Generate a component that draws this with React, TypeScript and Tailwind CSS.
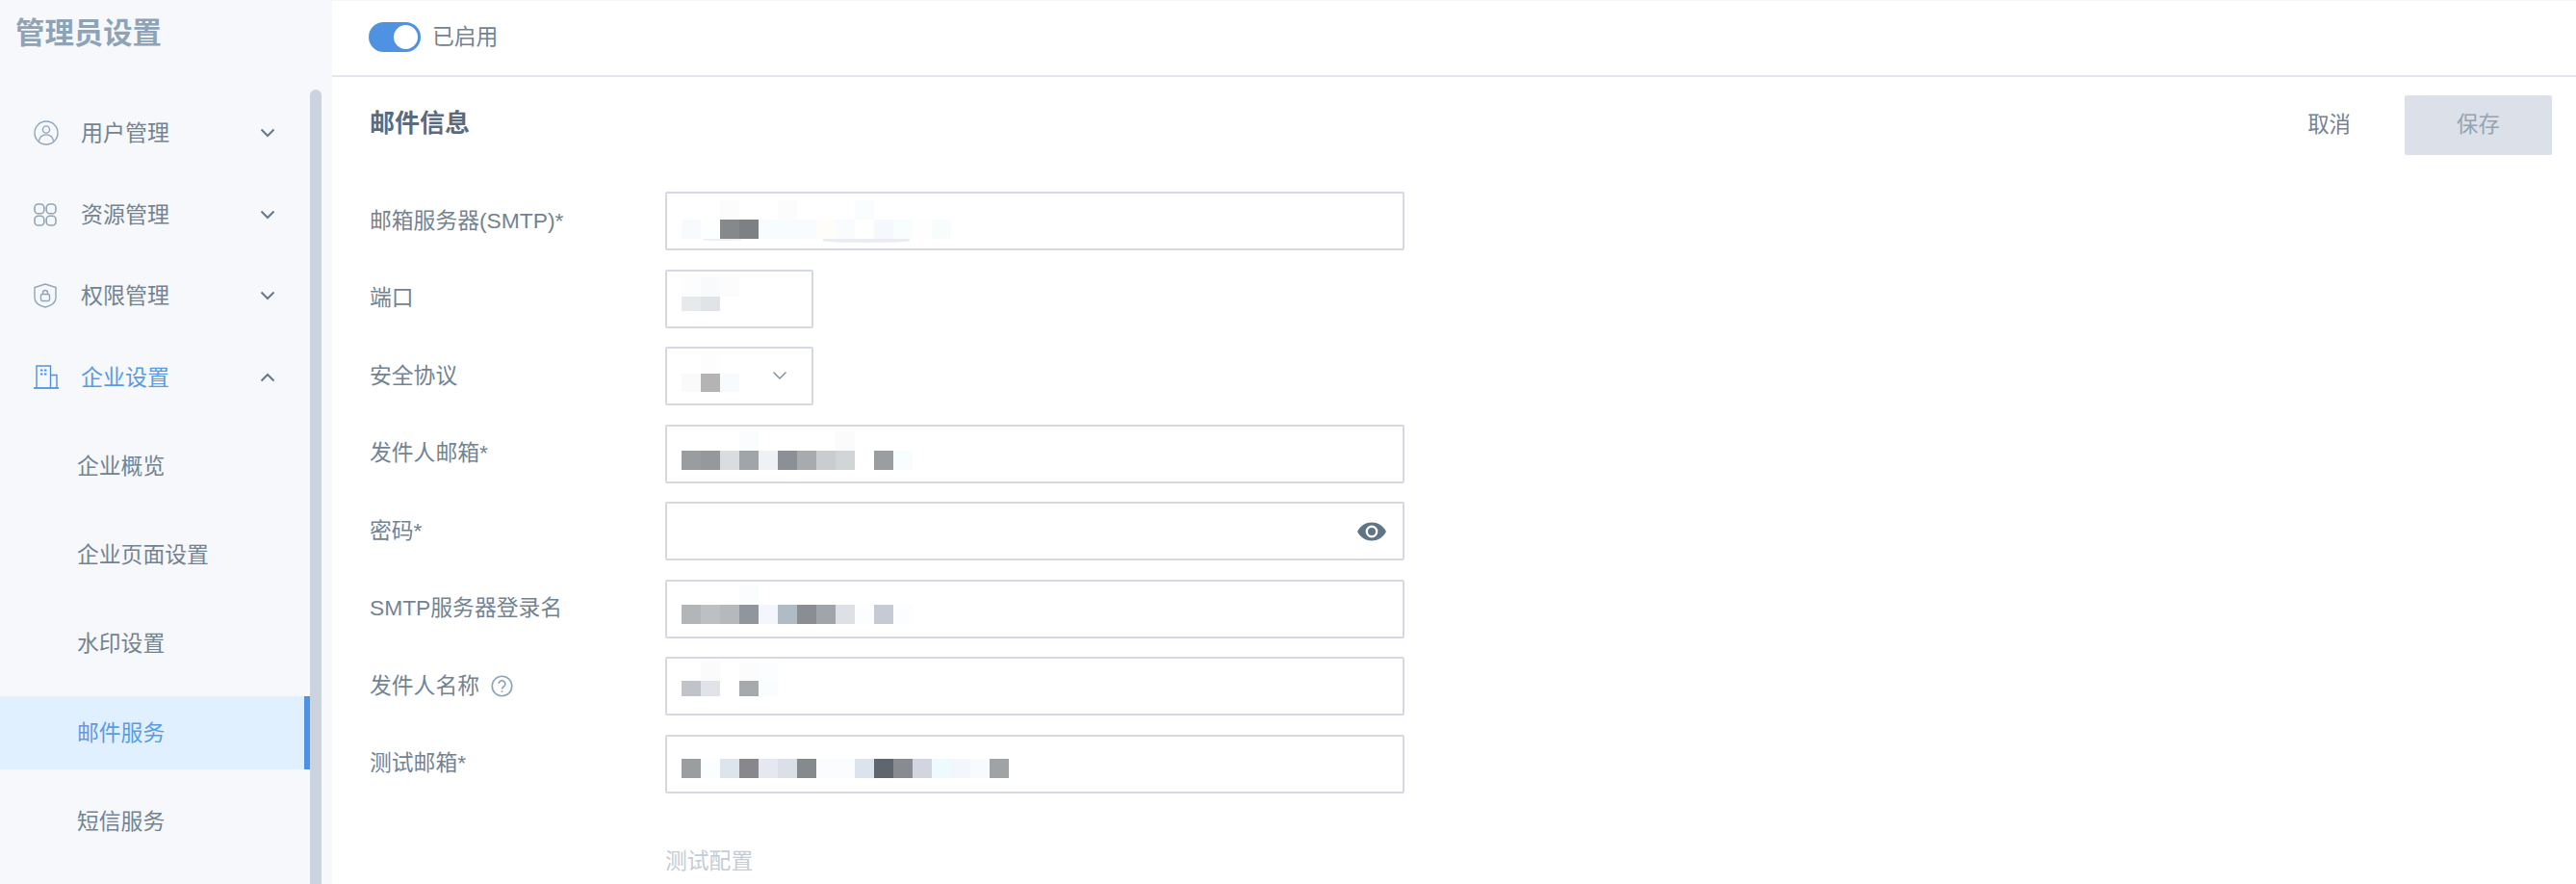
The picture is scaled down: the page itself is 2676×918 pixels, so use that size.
import type { ReactNode } from 'react'

const W = '#ffffff'

type Row = { h: number; cells: string[] }
type Field = {
  label: string
  help?: boolean
  narrow?: boolean
  select?: boolean
  eye?: boolean
  smear?: boolean
  offset?: number
  rows?: Row[]
}

// blurred-out values in the reference, one colour per 20px block
const fields: Field[] = [
  {
    label: '邮箱服务器(SMTP)*',
    offset: 7,
    smear: true,
    rows: [
      { h: 20, cells: [W, W, '#fcfcfc', W, W, '#fcfcfc', W, W, W, '#f9fdfd', W, W, W, W] },
      { h: 20, cells: ['#f7fbfd', '#fdfefe', '#85898c', '#7d8184', '#f7fcfe', '#f7fcfe', '#f8fcfe', '#fffdf9', '#f8fcfe', W, '#f5f9fd', '#f8fdfe', '#fefefe', '#f7fdfd'] },
    ],
  },
  {
    label: '端口',
    narrow: true,
    offset: 6,
    rows: [
      { h: 20, cells: ['#fdfdfe', '#f9fafb', '#fcfcfd'] },
      { h: 15, cells: ['#e6eaed', '#e0e4e8'] },
    ],
  },
  {
    label: '安全协议',
    narrow: true,
    select: true,
    offset: 6,
    rows: [
      { h: 20, cells: [W, '#fdfdfd', W] },
      { h: 19, cells: ['#fafafa', '#b4b4b4', '#f8fbfe'] },
    ],
  },
  {
    label: '发件人邮箱*',
    offset: 5,
    rows: [
      { h: 20, cells: [W, W, W, '#f9fdfe', W, W, W, W, '#fbfbfb'] },
      { h: 20, cells: ['#9a9da0', '#96999c', '#d9dde0', '#a0a5a9', '#eef2f5', '#8a9096', '#a7abad', '#c9cdd0', '#d0d5d8', W, '#9a9ea0', '#f8fdfe'] },
    ],
  },
  { label: '密码*', eye: true },
  {
    label: 'SMTP服务器登录名',
    offset: 4,
    rows: [
      { h: 20, cells: [W, W, W, '#f9fdfe'] },
      { h: 20, cells: ['#b3b6b9', '#bcc0c3', '#b5b9bc', '#8f969c', '#f3f6fd', '#b0bcc5', '#8a8e92', '#9fa5a9', '#dde1e5', '#fbfdfe', '#c6cad4', '#fbfdfe'] },
    ],
  },
  {
    label: '发件人名称',
    help: true,
    offset: 3,
    rows: [
      { h: 20, cells: [W, '#fbfbfb', W, '#fcfcfc', '#fbfdfe'] },
      { h: 16, cells: ['#c0c4c8', '#e0e4e8', W, '#a6aaad', '#fafdfe'] },
    ],
  },
  {
    label: '测试邮箱*',
    offset: 23,
    rows: [
      { h: 20, cells: ['#9a9ea0', '#fafeff', '#dce4ec', '#88878c', '#e5e8f0', '#dbe0e8', '#858b8c', '#fafcfe', '#fafcfe', '#dbe3ec', '#5f666e', '#888c90', '#d2d5e0', '#eefbfe', '#f3f6fd', '#f8fbfe', '#9fa3a5'] },
    ],
  },
]

function Chevron({ up, className }: { up?: boolean; className?: string }) {
  return (
    <svg width="16" height="10" viewBox="0 0 16 10" fill="none" stroke="currentColor" strokeWidth="2" className={className}>
      <path d={up ? 'M1.5 8.5 8 2l6.5 6.5' : 'M1.5 1.5 8 8l6.5-6.5'} />
    </svg>
  )
}

const UserIcon = (
  <svg width="26" height="26" viewBox="0 0 26 26" fill="none" stroke="#8fa5ba" strokeWidth="1.4">
    <circle cx="13" cy="13" r="12" />
    <circle cx="13" cy="9.5" r="3.6" />
    <path d="M5.5 21.5c.6-4 3.4-6.6 7.5-6.6s6.9 2.6 7.5 6.6" />
  </svg>
)

const GridIcon = (
  <svg width="24" height="24" viewBox="0 0 24 24" fill="none" stroke="#8fa5ba" strokeWidth="1.6">
    <rect x="1" y="1" width="9.8" height="9.8" rx="3.6" />
    <rect x="13.2" y="1" width="9.8" height="9.8" rx="3.6" />
    <rect x="1" y="13.2" width="9.8" height="9.8" rx="3.6" />
    <rect x="13.2" y="13.2" width="9.8" height="9.8" rx="3.6" />
  </svg>
)

const ShieldIcon = (
  <svg width="24" height="26" viewBox="0 0 24 26" fill="none" stroke="#8fa5ba" strokeWidth="1.4">
    <path d="M12 1 23 4.5V15c0 5-5 8.5-11 10C6 23.5 1 20 1 15V4.5z" />
    <rect x="7.5" y="11.5" width="9" height="7" rx="1.4" />
    <path d="M9.5 11.5V10a2.5 2.5 0 0 1 5 0v1.5" />
  </svg>
)

const BuildingIcon = (
  <svg width="26" height="25" viewBox="0 0 26 25" fill="none" stroke="#4f92e2" strokeWidth="1.4">
    <path d="M3 23.5V1h14.500v22.500" />
    <path d="M17.500 10.500H24v13" />
    <path d="M0 24h26" strokeWidth="1.8" />
    <path d="M7 5.500h2.400M11 5.500h2.400M7 9.500h2.400M11 9.500h2.400" strokeWidth="2.2" />
  </svg>
)

function NavGroup({ icon, label, active }: { icon: ReactNode; label: string; active?: boolean }) {
  return (
    <div className="flex h-[84.5px] items-center">
      <div className="ml-[35px] flex w-[49px] items-center">{icon}</div>
      <span className={`w-[186px] text-[23px] ${active ? 'text-[#5a9be6]' : 'text-[#738392]'}`}>{label}</span>
      <Chevron up={active} className="text-[#66788a]" />
    </div>
  )
}

function SubItem({ label, active }: { label: string; active?: boolean }) {
  return (
    <div
      className={`flex h-[76px] items-center pl-[80px] text-[22.8px] ${
        active ? 'border-r-[6px] border-[#4f92e2] bg-[#e1f0fe] text-[#5a9be6]' : 'text-[#738392]'
      }`}
    >
      {label}
    </div>
  )
}

function Sidebar() {
  return (
    <aside className="flex h-full w-[345px] shrink-0 bg-[#f6f8fc]">
      <div className="w-[322px]">
        <div className="h-[96px] pl-4 pt-[14px] text-[30.4px] leading-[40px] font-bold text-[#8fa3b6]">管理员设置</div>
        <NavGroup icon={UserIcon} label="用户管理" />
        <NavGroup icon={GridIcon} label="资源管理" />
        <NavGroup icon={ShieldIcon} label="权限管理" />
        <NavGroup icon={BuildingIcon} label="企业设置" active />
        <div className="mt-3 flex flex-col gap-[16.25px]">
          <SubItem label="企业概览" />
          <SubItem label="企业页面设置" />
          <SubItem label="水印设置" />
          <SubItem label="邮件服务" active />
          <SubItem label="短信服务" />
        </div>
      </div>
      <div className="mt-[93px] h-full w-3 rounded-t-md bg-[#cad3de]" />
    </aside>
  )
}

function Mosaic({ rows, offset }: { rows: Row[]; offset: number }) {
  return (
    <div className="pl-[15px]" style={{ paddingTop: offset }}>
      {rows.map((row, i) => (
        <div key={i} className="flex">
          {row.cells.map((c, j) => (
            <div key={j} className="w-5" style={{ height: row.h, backgroundColor: c }} />
          ))}
        </div>
      ))}
    </div>
  )
}

function FormRow({ field }: { field: Field }) {
  return (
    <div className="flex h-[61px]">
      <div className="flex w-[307px] items-center gap-[12px] pb-[1px] text-[22.8px] text-[#738392]">
        <span>{field.label}</span>
        {field.help && (
          <svg width="23" height="23" viewBox="0 0 22 22" fill="none" stroke="#8ea4b8" strokeWidth="1.6">
            <circle cx="11" cy="11" r="9.8" />
            <path d="M7.8 8.7a3.2 3.2 0 1 1 4.9 2.7c-1.100.7-1.700 1.300-1.700 2.500" />
            <path d="M11 15.500v1.600" />
          </svg>
        )}
      </div>
      <div
        className={`relative rounded-[2px] border-2 border-[#d5d9e6] bg-white ${field.narrow ? 'w-[154px]' : 'w-[768px]'}`}
      >
        {field.rows && <Mosaic rows={field.rows} offset={field.offset ?? 0} />}
        {field.smear && (
          <>
            <div className="absolute left-[38px] top-[47px] h-[2px] w-[40px] rounded-b-[100%] bg-[#eeeff3]" />
            <div className="absolute left-[162px] top-[47px] h-[4px] w-[90px] rounded-b-[100%] bg-[#ebecf1]" />
          </>
        )}
        {field.select && <Chevron className="absolute right-[25px] top-[23px] text-[#7c8b99] [&_path]:[stroke-width:1.4]" />}
        {field.eye && (
          <svg className="absolute right-[17px] top-[18px]" width="30" height="22" viewBox="0 0 30 22">
            <path d="M0 11C3.5 4.5 9 1.500 15 1.500S26.500 4.500 30 11c-3.500 6.500-9 9.500-15 9.500S3.500 17.500 0 11z" fill="#5f7486" />
            <circle cx="15" cy="11" r="5.2" fill="none" stroke="#fff" strokeWidth="2.4" />
          </svg>
        )}
      </div>
    </div>
  )
}

export default function App() {
  return (
    <div className="flex h-[918px] w-[2676px] overflow-hidden bg-white font-['Liberation_Sans','Noto_Sans_CJK_SC',sans-serif]">
      <Sidebar />
      <main className="h-full flex-1 border-t border-[#f4f6fa]">
        <div className="flex h-[79px] items-center gap-3 border-b-2 border-[#e3e6ee] pb-[3px] pl-[38px]">
          <div className="flex h-[31px] w-[54px] items-center justify-end rounded-full bg-[#4f92e2] pr-[3px]">
            <div className="h-[25px] w-[25px] rounded-full bg-white" />
          </div>
          <span className="text-[22.8px] text-[#738392]">已启用</span>
        </div>

        <div className="flex items-center justify-between pb-[38px] pl-[39px] pr-[25px] pt-[19px]">
          <h2 className="pb-[3px] text-[26px] font-bold text-[#5b6b7c]">邮件信息</h2>
          <div className="flex items-center gap-[56px]">
            <button className="text-[22.4px] text-[#738392]">取消</button>
            <button className="h-[62px] w-[153px] rounded-[2px] bg-[#dbe0e9] text-[22.4px] text-[#94a4b3]">保存</button>
          </div>
        </div>

        <div className="flex flex-col gap-[19.5px] pl-[39px]">
          {fields.map(f => (
            <FormRow key={f.label} field={f} />
          ))}
        </div>

        <div className="ml-[346px] mt-[52px] text-[22.8px] leading-[36px] text-[#c4ccd5]">测试配置</div>
      </main>
    </div>
  )
}
